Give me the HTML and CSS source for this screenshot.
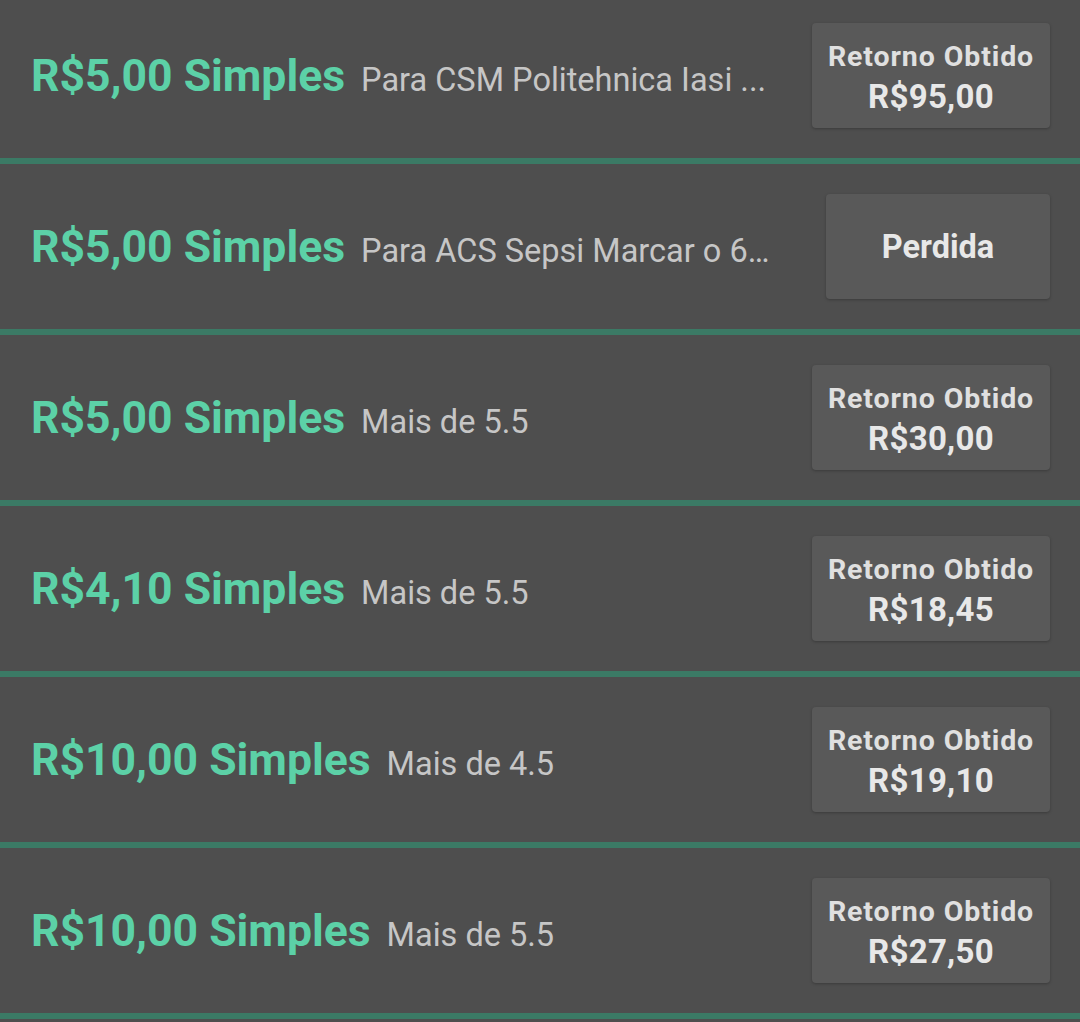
FILE: index.html
```html
<!DOCTYPE html>
<html lang="pt-BR">
<head>
<meta charset="utf-8">
<title>Apostas</title>
<link rel="stylesheet" href="styles.css">
</head>
<body>
<div class="list">
  <div class="bet">
    <div class="info"><span class="stake">R$5,00 Simples</span><span class="desc">Para CSM Politehnica Iasi ...</span></div>
    <div class="status"><span class="label">Retorno Obtido</span><span class="amount">R$95,00</span></div>
  </div>
  <div class="bet">
    <div class="info"><span class="stake">R$5,00 Simples</span><span class="desc">Para ACS Sepsi Marcar o 6…</span></div>
    <div class="status lost"><span class="lost-text">Perdida</span></div>
  </div>
  <div class="bet">
    <div class="info"><span class="stake">R$5,00 Simples</span><span class="desc">Mais de 5.5</span></div>
    <div class="status"><span class="label">Retorno Obtido</span><span class="amount">R$30,00</span></div>
  </div>
  <div class="bet">
    <div class="info"><span class="stake">R$4,10 Simples</span><span class="desc">Mais de 5.5</span></div>
    <div class="status"><span class="label">Retorno Obtido</span><span class="amount">R$18,45</span></div>
  </div>
  <div class="bet">
    <div class="info"><span class="stake">R$10,00 Simples</span><span class="desc">Mais de 4.5</span></div>
    <div class="status"><span class="label">Retorno Obtido</span><span class="amount">R$19,10</span></div>
  </div>
  <div class="bet">
    <div class="info"><span class="stake">R$10,00 Simples</span><span class="desc">Mais de 5.5</span></div>
    <div class="status"><span class="label">Retorno Obtido</span><span class="amount">R$27,50</span></div>
  </div>
</div>
</body>
</html>
```

FILE: styles.css
```css
html, body {
  margin: 0;
  padding: 0;
  background: #4e4e4e;
  font-family: Roboto, "Noto Sans", "Liberation Sans", sans-serif;
}

.list {
  margin-top: -7px;
}

.bet {
  display: flex;
  align-items: center;
  height: 165px;
  padding: 0 30px 0 30px;
  border-bottom: 6px solid #3b7a65;
  background: #4e4e4e;
}

.info {
  flex: 1;
  min-width: 0;
  display: flex;
  align-items: baseline;
  white-space: nowrap;
  overflow: hidden;
}

.stake {
  font-size: 44.5px;
  font-weight: 700;
  color: #5cd1a7;
  padding-left: 1px;
}

.desc {
  margin-left: 16px;
  font-size: 32.5px;
  color: #c6c6c6;
}

.status {
  flex: none;
  width: 238px;
  height: 105px;
  box-sizing: border-box;
  padding-top: 3px;
  border-radius: 4px;
  background: #595959;
  box-shadow: 0 1px 3px rgba(0, 0, 0, 0.25);
  display: flex;
  flex-direction: column;
  align-items: center;
  justify-content: center;
  color: #e8e8e8;
  font-weight: 700;
}

.status.lost {
  width: 224px;
  padding-top: 0;
}

.label {
  font-size: 28.5px;
  line-height: 38px;
  color: #e0e0e0;
  letter-spacing: 0.9px;
}

.amount {
  font-size: 33px;
  line-height: 41px;
  letter-spacing: 0.3px;
}

.lost-text {
  font-size: 32.5px;
}
```
